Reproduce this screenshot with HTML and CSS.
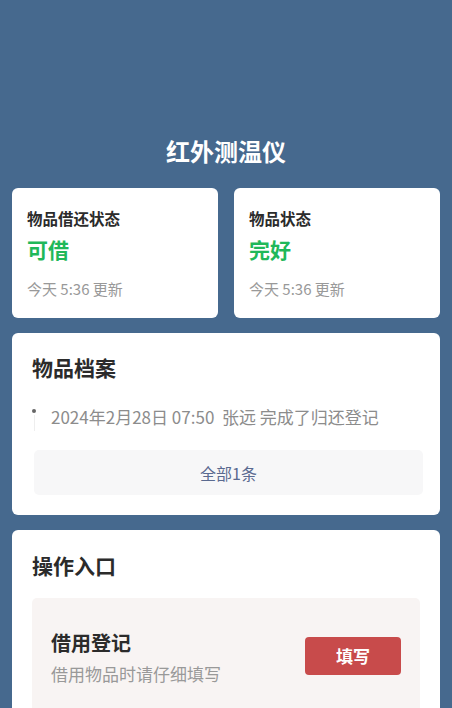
FILE: index.html
```html
<!DOCTYPE html>
<html lang="zh-CN">

<head>
    <meta charset="UTF-8">
    <meta name="viewport" content="width=device-width, initial-scale=1.0">
    <title>红外测温仪</title>
    <link rel="stylesheet" href="styles.css">
</head>

<body>
    <div class="page">
        <!-- Header -->
        <h1 class="page-title">红外测温仪</h1>

        <!-- Status cards -->
        <div class="status-row">
            <div class="status-card">
                <div class="status-label">物品借还状态</div>
                <div class="status-value">可借</div>
                <div class="status-time">今天 5:36 更新</div>
            </div>
            <div class="status-card">
                <div class="status-label">物品状态</div>
                <div class="status-value">完好</div>
                <div class="status-time">今天 5:36 更新</div>
            </div>
        </div>

        <!-- Archive -->
        <div class="panel archive">
            <h2 class="panel-title">物品档案</h2>
            <ul class="timeline">
                <li class="timeline-item">2024年2月28日 07:50&nbsp;&nbsp;张远 完成了归还登记</li>
            </ul>
            <button class="more-btn">全部1条</button>
        </div>

        <!-- Actions -->
        <div class="panel actions">
            <h2 class="panel-title">操作入口</h2>
            <div class="action-box">
                <div class="action-text">
                    <div class="action-name">借用登记</div>
                    <div class="action-desc">借用物品时请仔细填写</div>
                </div>
                <button class="action-btn">填写</button>
            </div>
        </div>
    </div>
</body>

</html>
```

FILE: styles.css
```css
:root {
    --color-bg: #46698e;
    --color-green: #1fb85a;
    --color-red: #c84b4b;
    --color-text: #2b2b2b;
    --color-muted: #999999;
}

* {
    margin: 0;
    padding: 0;
    box-sizing: border-box;
    font-family: 'Noto Sans CJK SC', 'Noto Sans', sans-serif;
}

body {
    background-color: var(--color-bg);
    height: 100vh;
    overflow: hidden;
}

.page {
    padding: 134px 12px 0;
}

.page-title {
    font-size: 24px;
    line-height: 34px;
    font-weight: 700;
    color: #fff;
    text-align: center;
    margin-bottom: 20px;
}

/* Status cards */
.status-row {
    display: flex;
    gap: 16px;
}

.status-card {
    flex: 1;
    background: #fff;
    border-radius: 6px;
    padding: 20px 15px 19px;
}

.status-label {
    font-size: 15.5px;
    line-height: 20px;
    font-weight: 700;
    color: var(--color-text);
}

.status-value {
    font-size: 21px;
    line-height: 28px;
    font-weight: 700;
    color: var(--color-green);
    margin-top: 7px;
}

.status-time {
    font-size: 15px;
    line-height: 20px;
    color: var(--color-muted);
    margin-top: 16px;
}

/* Panels */
.panel {
    background: #fff;
    border-radius: 6px;
    margin-top: 15px;
    padding: 20px 17px 20px 20px;
}

.panel-title {
    font-size: 21px;
    line-height: 28px;
    font-weight: 700;
    color: var(--color-text);
}

.timeline {
    list-style: none;
    margin-top: 24px;
}

.timeline-item {
    position: relative;
    padding-left: 19px;
    font-size: 17px;
    line-height: 24px;
    color: #8c8c8c;
}

.timeline-item::before {
    content: '';
    position: absolute;
    left: 0;
    top: 4px;
    width: 4px;
    height: 4px;
    border-radius: 50%;
    background: #666;
}

.timeline-item::after {
    content: '';
    position: absolute;
    left: 1.5px;
    top: 10px;
    width: 1px;
    height: 16px;
    background: #eeeeee;
}

.more-btn {
    display: block;
    width: calc(100% - 2px);
    margin: 21px 0 0 2px;
    height: 45px;
    border: none;
    border-radius: 5px;
    background: #f7f7f8;
    color: #5a6a90;
    font-size: 16px;
}

.actions {
    padding: 21px 20px 20px;
}

.action-box {
    margin-top: 19px;
    background: #f8f4f3;
    border-radius: 5px;
    padding: 31px 19px 28px;
    display: flex;
    align-items: center;
    justify-content: space-between;
}

.action-name {
    font-size: 20px;
    line-height: 28px;
    font-weight: 700;
    color: var(--color-text);
}

.action-desc {
    font-size: 17px;
    line-height: 24px;
    color: var(--color-muted);
    margin-top: 5px;
}

.action-btn {
    width: 96px;
    height: 38px;
    border: none;
    border-radius: 4px;
    background: var(--color-red);
    color: #fff;
    font-size: 17px;
    font-weight: 700;
    margin-top: -4px;
}
```
